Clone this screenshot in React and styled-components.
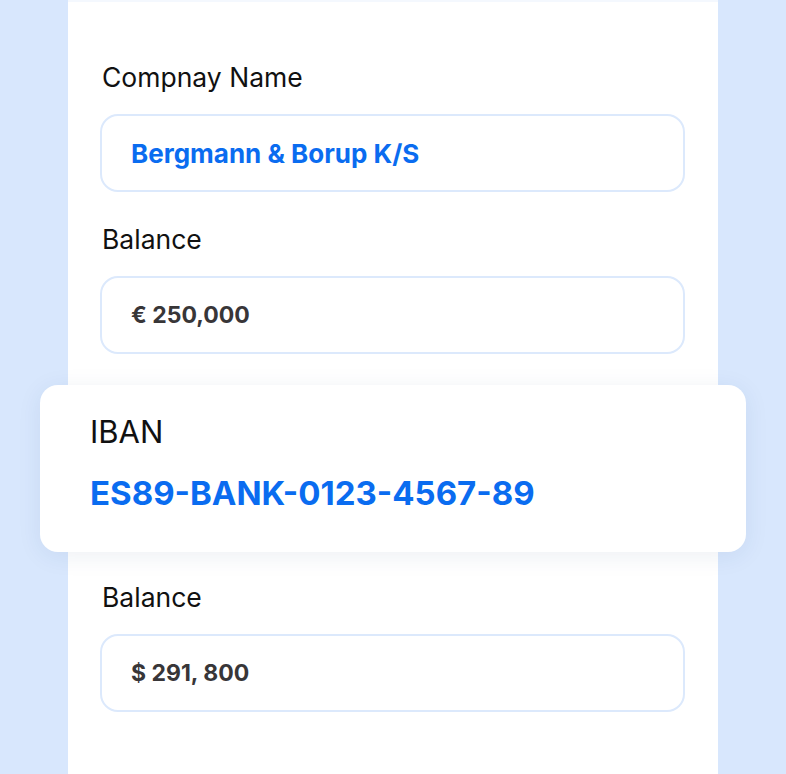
import styled, { createGlobalStyle } from 'styled-components'

const GlobalStyle = createGlobalStyle`
  * { box-sizing: border-box; }
  html, body {
    margin: 0;
    padding: 0;
    background: #d8e7fd;
    font-family: Inter, "Noto Sans", sans-serif;
  }
`

const fields = [
  { label: 'Compnay Name', value: 'Bergmann & Borup K/S', accent: true },
  { label: 'Balance', value: '€ 250,000' },
]

const lower = [{ label: 'Balance', value: '$ 291, 800' }]

const Field = ({ label, value, accent }) => (
  <FieldBox>
    <Label>{label}</Label>
    <InputBox>
      <Value $accent={accent}>{value}</Value>
    </InputBox>
  </FieldBox>
)

const App = () => {
  return (
    <>
      <GlobalStyle />
      <Page>
        <Panel>
          {fields.map(f => (
            <Field key={f.label + f.value} {...f} />
          ))}
          <IbanCard>
            <IbanLabel>IBAN</IbanLabel>
            <IbanValue>ES89-BANK-0123-4567-89</IbanValue>
          </IbanCard>
          {lower.map(f => (
            <Field key={f.label + f.value} {...f} />
          ))}
        </Panel>
      </Page>
    </>
  )
}
export default App

const Page = styled.div`
  width: 786px;
  height: 774px;
  overflow: hidden;
  padding-left: 68px;
`

const Panel = styled.div`
  width: 650px;
  min-height: 774px;
  background: #ffffff;
  border-top: 2px solid #f4f8fe;
  padding: 59px 33px 0 32px;
  display: flex;
  flex-direction: column;
  gap: 31px;
`

const FieldBox = styled.div`
  display: flex;
  flex-direction: column;
  gap: 21px;
`

const Label = styled.div`
  font-size: 26.5px;
  line-height: 32px;
  color: #111;
  padding-left: 2px;
`

const InputBox = styled.div`
  height: 78px;
  border: 2px solid #dce9fc;
  border-radius: 18px;
  display: flex;
  align-items: center;
  padding: 0 29px;
`

const Value = styled.span`
  font-size: ${p => (p.$accent ? '26px' : '23px')};
  font-weight: 700;
  color: ${p => (p.$accent ? '#0a6cf0' : '#383638')};
`

const IbanCard = styled.div`
  margin: 0 -61px -2px -60px;
  height: 167px;
  background: #ffffff;
  border-radius: 18px;
  box-shadow: 0 4px 24px rgba(30, 60, 120, 0.08);
  padding: 28px 50px 0;
  display: flex;
  flex-direction: column;
  gap: 22px;
`

const IbanLabel = styled.div`
  font-size: 31px;
  line-height: 38px;
  color: #111;
`

const IbanValue = styled.div`
  font-size: 33px;
  line-height: 40px;
  font-weight: 700;
  color: #0a6cf0;
`
